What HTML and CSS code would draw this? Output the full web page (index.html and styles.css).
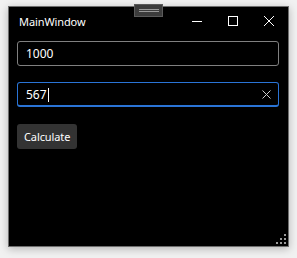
FILE: index.html
```html
<!DOCTYPE html>
<html>
<head>
<meta charset="utf-8">
<link rel="stylesheet" href="styles.css">
</head>
<body>
<div class="window">
  <div class="handle"><span></span></div>
  <div class="titlebar">
    <div class="title">MainWindow</div>
    <div class="controls">
      <div class="ctl"><svg width="10" height="10" viewBox="0 0 10 10"><path d="M0 5.5H10" stroke="#fff" stroke-width="1"/></svg></div>
      <div class="ctl"><svg width="10" height="10" viewBox="0 0 10 10"><rect x="0.5" y="0.5" width="9" height="9" fill="none" stroke="#fff" stroke-width="1"/></svg></div>
      <div class="ctl"><svg width="10" height="10" viewBox="0 0 10 10"><path d="M0 0L10 10M10 0L0 10" stroke="#fff" stroke-width="1"/></svg></div>
    </div>
  </div>
  <div class="content">
    <div class="textbox"><span class="val">1000</span></div>
    <div class="textbox focused"><span class="val">567</span><span class="caret"></span><span class="clear"><svg width="9" height="9" viewBox="0 0 9 9"><path d="M0.5 0.5L8.5 8.5M8.5 0.5L0.5 8.5" stroke="#ccc" stroke-width="1"/></svg></span></div>
    <div class="btnrow"><button class="btn">Calculate</button></div>
  </div>
  <div class="grip">
    <svg width="10" height="10" viewBox="0 0 10 10" fill="#9a9a9a">
      <rect x="8" y="0" width="2" height="2"/>
      <rect x="8" y="4" width="2" height="2"/><rect x="4" y="4" width="2" height="2"/>
      <rect x="8" y="8" width="2" height="2"/><rect x="4" y="8" width="2" height="2"/><rect x="0" y="8" width="2" height="2"/>
    </svg>
  </div>
</div>
</body>
</html>
```
FILE: styles.css
```css
html, body { margin: 0; padding: 0; }
body {
  background: #f1f1f1;
  width: 297px;
  height: 258px;
  overflow: hidden;
  font-family: "Noto Sans", "Open Sans", sans-serif;
}
.window {
  position: relative;
  margin: 6px 0 0 8px;
  width: 281px;
  height: 241px;
  box-sizing: border-box;
  background: #000;
  border: 1px solid #6e6e6e;
  box-shadow: 0 2px 8px rgba(0,0,0,0.25);
  display: flex;
  flex-direction: column;
}
.handle {
  position: absolute;
  left: 125px;
  top: -3px;
  width: 29px;
  height: 13px;
  box-sizing: border-box;
  background: #3c3c3c;
  border: 1px solid #5a5a5a;
  display: flex;
  align-items: center;
  justify-content: center;
}
.handle span {
  display: block;
  width: 20px;
  height: 3px;
  border-top: 1px solid #9a9a9a;
  border-bottom: 1px solid #9a9a9a;
  box-sizing: border-box;
}
.titlebar {
  height: 28px;
  display: flex;
  align-items: center;
  justify-content: space-between;
  padding: 0 1px 0 10px;
  color: #fff;
}
.title {
  font-size: 11px;
  letter-spacing: -0.1px;
}
.controls { display: flex; }
.ctl {
  width: 36px;
  height: 28px;
  display: flex;
  align-items: center;
  justify-content: center;
}
.ctl svg { display: block; }
.content {
  padding: 6px 9px 0 8px;
  display: flex;
  flex-direction: column;
  gap: 16px;
}
.textbox {
  height: 25px;
  box-sizing: border-box;
  border: 1px solid #808080;
  border-radius: 3px;
  background: #000;
  display: flex;
  align-items: center;
  padding: 0 8px;
  color: #fff;
  font-size: 12px;
}
.textbox.focused {
  border-color: #2a74d6;
  border-bottom-width: 2px;
  padding-top: 1px;
}
.caret {
  display: inline-block;
  width: 1px;
  height: 14px;
  background: #fff;
  margin-left: 1px;
}
.clear {
  margin-left: auto;
  display: flex;
  margin-right: -1px;
}
.btnrow { display: flex; margin-top: 1px; }
.btn {
  height: 25px;
  padding: 0 7px;
  background: #333333;
  color: #fff;
  border: none;
  border-radius: 3px;
  font-family: "Noto Sans", "Open Sans", sans-serif;
  font-size: 11px;
  letter-spacing: -0.1px;
}
.grip {
  position: absolute;
  right: 2px;
  bottom: 2px;
  display: flex;
}
```
